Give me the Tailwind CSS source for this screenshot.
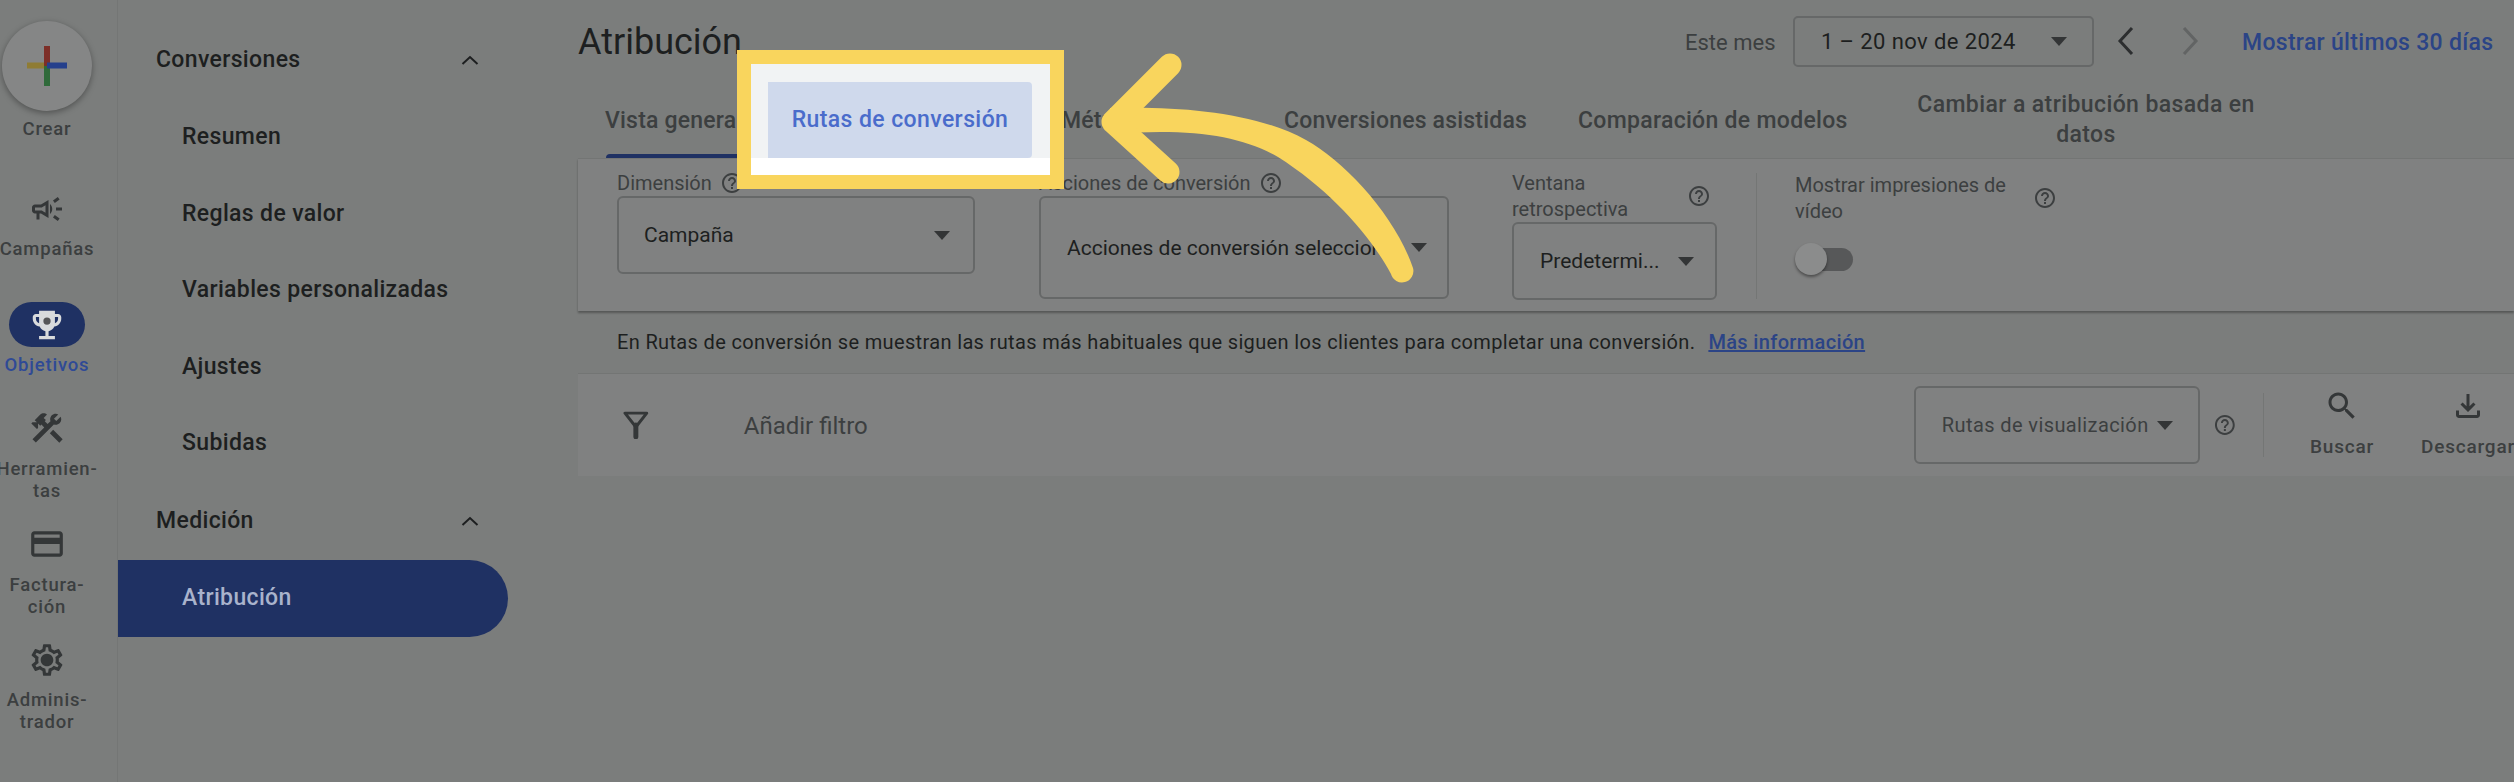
<!DOCTYPE html>
<html lang="es">
<head>
  <meta charset="UTF-8">
  <title>Atribución</title>
  <script src="https://cdn.jsdelivr.net/npm/@tailwindcss/browser@4"></script>
</head>
<body class="relative w-[2514px] h-[782px] overflow-hidden flex bg-[#7b7d7c] text-[#1d1f20] font-['Roboto',sans-serif]">

  <svg class="hidden">
    <symbol id="help" viewBox="0 0 24 24"><path d="M11 18h2v-2h-2v2zm1-16C6.48 2 2 6.48 2 12s4.48 10 10 10 10-4.48 10-10S17.52 2 12 2zm0 18c-4.41 0-8-3.59-8-8s3.59-8 8-8 8 3.59 8 8-3.59 8-8 8zm0-14c-2.21 0-4 1.79-4 4h2c0-1.1.9-2 2-2s2 .9 2 2c0 2-3 1.75-3 5h2c0-2.25 3-2.5 3-5 0-2.21-1.79-4-4-4z"/></symbol>
    <symbol id="caret" viewBox="0 0 16 9"><path d="M0 0h16L8 9z"/></symbol>
    <symbol id="chev-up" viewBox="0 0 18 10"><path d="M1.5 9 9 2l7.500 7" fill="none" stroke="currentColor" stroke-width="2"/></symbol>
  </svg>

  <!-- Left rail -->
  <aside class="w-[118px] h-full shrink-0 border-r border-[#747675] pr-[23px] flex flex-col items-center text-[18.5px] leading-[22px] tracking-[0.8px] font-medium text-[#3c3f40] text-center">
    <div class="mt-[21px] w-[90px] h-[90px] shrink-0 rounded-full bg-[#858686] shadow-[0_2px_6px_rgba(0,0,0,0.35)] flex items-center justify-center">
      <svg width="40" height="40" viewBox="0 0 40 40">
        <rect x="0" y="16.500" width="20" height="6" fill="#8f7c34"/>
        <rect x="17" y="0" width="6" height="20" fill="#7d2f28"/>
        <rect x="17" y="20" width="6" height="20" fill="#2f6a3a"/>
        <rect x="20" y="16.500" width="20" height="6" fill="#25408c"/>
      </svg>
    </div>
    <div class="mt-[7px] h-[22px]">Crear</div>

    <svg class="mt-[51px] shrink-0 fill-[#343738]" width="36" height="36" viewBox="0 0 24 24"><path d="M18 11v2h4v-2h-4zm-2 6.610c.96.71 2.210 1.650 3.200 2.390.4-.53.8-1.070 1.200-1.600-.99-.74-2.240-1.680-3.200-2.400-.4.54-.8 1.080-1.200 1.610zM20.400 5.600c-.4-.53-.8-1.070-1.200-1.600-.99.74-2.240 1.680-3.200 2.400.4.53.8 1.070 1.200 1.600.96-.72 2.210-1.650 3.200-2.400zM4 9c-1.100 0-2 .9-2 2v2c0 1.100.9 2 2 2h1v4h2v-4h1l5 3V6L8 9H4zm5.030 1.710L11 9.530v4.940l-1.970-1.180-.48-.29H4v-2h4.550l.48-.29zM15.500 12c0-1.330-.58-2.530-1.500-3.350v6.690c.92-.81 1.500-2.010 1.500-3.340z"/></svg>
    <div class="mt-[11px] h-[22px]">Campañas</div>

    <div class="mt-[42px] w-[76px] h-[45px] shrink-0 rounded-full bg-[#1f3163] flex items-center justify-center">
      <svg class="fill-[#d9dbdc]" width="38" height="38" viewBox="0 0 24 24"><path d="M19 5h-2V3H7v2H5c-1.100 0-2 .9-2 2v1c0 2.550 1.920 4.630 4.390 4.940.63 1.500 1.980 2.630 3.610 2.960V19H7v2h10v-2h-4v-3.100c1.630-.33 2.980-1.460 3.610-2.960C19.080 12.630 21 10.550 21 8V7c0-1.100-.9-2-2-2zM5 8V7h2v3.820C5.840 10.400 5 9.300 5 8zm14 0c0 1.300-.84 2.400-2 2.820V7h2v1z"/><circle cx="12" cy="9.500" r="2.300" fill="#565657"/></svg>
    </div>
    <div class="mt-[7px] h-[22px] text-[#2f4a96]">Objetivos</div>

    <svg class="mt-[33px] shrink-0 fill-[#343738]" width="38" height="38" viewBox="0 0 24 24"><path d="M13.780 15.300l6 6 2.110-2.160-6-6zM17.500 10c1.930 0 3.500-1.570 3.500-3.500 0-.58-.16-1.120-.41-1.600l-2.700 2.700-1.490-1.490 2.700-2.700c-.48-.25-1.020-.41-1.600-.41C15.570 3 14 4.570 14 6.500c0 .41.08.8.21 1.160l-1.850 1.850-1.780-1.780.71-.71-1.410-1.410L12 3.490c-1.170-1.170-3.070-1.170-4.240 0L4.220 7.030l1.410 1.410H2.810l-.71.71 3.540 3.540.71-.71V9.150l1.410 1.410.71-.71 1.780 1.780-7.410 7.410 2.120 2.120L16.340 9.790c.36.13.75.21 1.160.21z"/></svg>
    <div class="mt-[11px] h-[44px] whitespace-nowrap">Herramien-<br>tas</div>

    <svg class="mt-[23px] shrink-0 fill-[#343738]" width="38" height="38" viewBox="0 0 24 24"><path d="M20 4H4c-1.110 0-1.990.89-1.990 2L2 18c0 1.110.89 2 2 2h16c1.110 0 2-.89 2-2V6c0-1.110-.89-2-2-2zm0 14H4v-6h16v6zm0-10H4V6h16v2z"/></svg>
    <div class="mt-[11px] h-[44px]">Factura-<br>ción</div>

    <svg class="mt-[23px] shrink-0 fill-[#343738]" width="38" height="38" viewBox="0 0 24 24"><path d="M19.430 12.980c.04-.32.07-.64.07-.98 0-.34-.03-.66-.07-.98l2.110-1.650c.19-.15.24-.42.12-.64l-2-3.460c-.09-.16-.26-.25-.44-.25-.06 0-.12.01-.17.03l-2.490 1c-.52-.4-1.080-.73-1.690-.98l-.38-2.650C14.460 2.180 14.250 2 14 2h-4c-.25 0-.46.18-.49.42l-.38 2.650c-.61.25-1.170.59-1.690.98l-2.490-1c-.06-.02-.12-.03-.18-.03-.17 0-.34.09-.43.25l-2 3.460c-.13.22-.07.49.12.64l2.110 1.650c-.04.32-.07.65-.07.98 0 .33.03.66.07.98l-2.110 1.650c-.19.15-.24.42-.12.64l2 3.460c.09.16.26.25.44.25.06 0 .12-.01.17-.03l2.490-1c.52.4 1.080.73 1.690.98l.38 2.650c.03.24.24.42.49.42h4c.25 0 .46-.18.49-.42l.38-2.650c.61-.25 1.170-.59 1.690-.98l2.490 1c.06.02.12.03.18.03.17 0 .34-.09.43-.25l2-3.460c.12-.22.07-.49-.12-.64l-2.110-1.650zm-1.980-1.710c.04.31.05.52.05.73 0 .21-.02.43-.05.73l-.14 1.130.89.7 1.080.84-.7 1.210-1.270-.51-1.040-.42-.9.68c-.43.32-.84.56-1.250.73l-1.060.43-.16 1.130-.2 1.350h-1.400l-.19-1.350-.16-1.130-1.060-.43c-.43-.18-.83-.41-1.230-.71l-.91-.7-1.060.43-1.270.51-.7-1.210 1.080-.84.89-.7-.14-1.130c-.03-.31-.05-.54-.05-.74s.02-.43.05-.73l.14-1.130-.89-.7-1.080-.84.7-1.210 1.270.51 1.040.42.9-.68c.43-.32.84-.56 1.250-.73l1.060-.43.16-1.130.2-1.350h1.390l.19 1.350.16 1.130 1.060.43c.43.18.83.41 1.230.71l.91.7 1.060-.43 1.270-.51.7 1.210-1.070.85-.89.7.14 1.130zM12 8c-2.210 0-4 1.790-4 4s1.790 4 4 4 4-1.790 4-4-1.790-4-4-4z"/></svg>
    <div class="mt-[10px] h-[44px]">Adminis-<br>trador</div>
  </aside>

  <!-- Section nav -->
  <nav class="w-[460px] h-full shrink-0 pt-[21px] text-[23px] font-medium tracking-[0.35px]">
    <div class="h-[78px] pl-[38px] pr-[99px] flex items-center justify-between">
      <span>Conversiones</span>
      <svg class="w-[18px] h-[10px]"><use href="#chev-up"/></svg>
    </div>
    <div class="h-[77px] pl-[64px] flex items-center">Resumen</div>
    <div class="h-[76px] pl-[64px] flex items-center">Reglas de valor</div>
    <div class="h-[77px] pl-[64px] flex items-center">Variables personalizadas</div>
    <div class="h-[76px] pl-[64px] flex items-center">Ajustes</div>
    <div class="h-[77px] pl-[64px] flex items-center">Subidas</div>
    <div class="h-[78px] pl-[38px] pr-[99px] flex items-center justify-between">
      <span>Medición</span>
      <svg class="w-[18px] h-[10px]"><use href="#chev-up"/></svg>
    </div>
    <div class="h-[77px] w-[390px] pl-[64px] flex items-center rounded-r-full bg-[#1f3163] text-[#a9b3cc]">Atribución</div>
  </nav>

  <!-- Main -->
  <main class="flex-1 min-w-0">
    <header class="h-[84px] flex items-start">
      <h1 class="w-[1107px] pt-[21px] text-[36px] leading-[42px] font-normal">Atribución</h1>
      <span class="w-[108px] pt-[30px] text-[22px] leading-[26px] text-[#3c3f40]">Este mes</span>
      <div class="mt-[16px] w-[301px] h-[51px] rounded-[5px] border-2 border-[#666868] pl-[26px] pr-[25px] flex items-center justify-between text-[22px] tracking-[0.4px]">
        <span>1 – 20 nov de 2024</span>
        <svg class="w-[16px] h-[9px] fill-[#333536]"><use href="#caret"/></svg>
      </div>
      <svg class="ml-[23px] mt-[26px]" width="18" height="30" viewBox="0 0 18 30"><path d="M15 2 3 15l12 13" fill="none" stroke="#2c2e2f" stroke-width="3"/></svg>
      <svg class="ml-[46px] mt-[26px]" width="18" height="30" viewBox="0 0 18 30"><path d="m3 2 12 13L3 28" fill="none" stroke="#626464" stroke-width="3"/></svg>
      <a class="ml-[43px] pt-[30px] text-[23px] leading-[26px] font-medium tracking-[0.3px] text-[#2b4486] whitespace-nowrap">Mostrar últimos 30 días</a>
    </header>

    <div class="relative h-[74px] flex items-center text-[23px] font-medium text-[#3c3f40] tracking-[0.2px]">
      <span class="ml-[27px] w-[456px]">Vista general</span>
      <span class="w-[223px]">Métricas</span>
      <span class="w-[294px]">Conversiones asistidas</span>
      <span class="w-[340px] tracking-[0.3px]">Comparación de modelos</span>
      <span class="w-[340px] -ml-[2px] text-center whitespace-nowrap leading-[30px] -mt-[2px] tracking-[0.4px]">Cambiar a atribución basada en<br>datos</span>
      <div class="absolute left-[28px] bottom-0 w-[190px] h-[4px] rounded-t bg-[#1f3163]"></div>
    </div>

    <!-- Selectors -->
    <section class="h-[153px] bg-[#808181] border-t border-[#737574] shadow-[0_2px_2px_rgba(0,0,0,0.3)] pl-[39px] flex text-[20px] leading-[26px] text-[#3c3f40]">
      <div class="w-[422px] pt-[11px]">
        <div class="h-[26px] flex items-center gap-[8px]">Dimensión <svg class="w-[24px] h-[24px] fill-[#3c3f40]"><use href="#help"/></svg></div>
        <div class="w-[358px] h-[78px] rounded-[6px] border-2 border-[#666868] pl-[25px] pr-[23px] flex items-center justify-between text-[21px] text-[#1d1f20]">
          <span>Campaña</span>
          <svg class="w-[16px] h-[9px] fill-[#333536]"><use href="#caret"/></svg>
        </div>
      </div>
      <div class="w-[473px] pt-[11px]">
        <div class="h-[26px] flex items-center gap-[8px]">Acciones de conversión <svg class="w-[24px] h-[24px] fill-[#3c3f40]"><use href="#help"/></svg></div>
        <div class="w-[410px] h-[103px] rounded-[6px] border-2 border-[#666868] pl-[26px] pr-[20px] flex items-center justify-between text-[21px] text-[#1d1f20]">
          <span class="whitespace-nowrap">Acciones de conversión seleccion...</span>
          <svg class="w-[16px] h-[9px] shrink-0 fill-[#333536]"><use href="#caret"/></svg>
        </div>
      </div>
      <div class="w-[244px] pt-[11px]">
        <div class="w-[199px] flex items-center justify-between">
          <span class="w-[150px]">Ventana retrospectiva</span>
          <svg class="w-[24px] h-[24px] fill-[#3c3f40]"><use href="#help"/></svg>
        </div>
        <div class="w-[205px] h-[78px] rounded-[6px] border-2 border-[#666868] pl-[26px] pr-[21px] flex items-center justify-between text-[21px] text-[#1d1f20]">
          <span>Predetermi...</span>
          <svg class="w-[16px] h-[9px] fill-[#333536]"><use href="#caret"/></svg>
        </div>
      </div>
      <div class="mt-[14px] h-[126px] border-l border-[#747675] pl-[38px]">
        <div class="w-[262px] -mt-[1px] flex items-center justify-between">
          <span class="w-[224px]">Mostrar impresiones de vídeo</span>
          <svg class="w-[24px] h-[24px] fill-[#3c3f40]"><use href="#help"/></svg>
        </div>
        <div class="relative mt-[19px] w-[58px] h-[32px] flex items-center">
          <div class="ml-[16px] w-[42px] h-[23px] rounded-r-full bg-[#575859]"></div>
          <div class="absolute left-0 top-0 w-[32px] h-[32px] rounded-full bg-[#8b8c8c] shadow-[0_2px_3px_rgba(0,0,0,0.4)]"></div>
        </div>
      </div>
    </section>

    <!-- Info text -->
    <p class="h-[63px] pl-[39px] flex items-center text-[20px] tracking-[0.35px] text-[#1d1f20] border-b border-[#737574]">
      En Rutas de conversión se muestran las rutas más habituales que siguen los clientes para completar una conversión.
      <a class="ml-[13px] font-medium text-[#2b4486] underline">Más información</a>
    </p>

    <!-- Filter bar -->
    <div class="h-[102px] bg-[#808181] flex items-center text-[24px] text-[#3c3f40]">
      <svg class="ml-[45px]" width="26" height="28" viewBox="0 0 26 28" fill="none" stroke="#343738" stroke-linejoin="round"><path d="M2 2h22l-11 14z" stroke-width="3"/><path d="M13 14v12" stroke-width="5" stroke-linecap="round"/></svg>
      <span class="ml-[95px] w-[1183px] pt-[2px]">Añadir filtro</span>
      <div class="w-[289px] h-[78px] rounded-[6px] border-2 border-[#666868] pl-[26px] pr-[25px] flex items-center justify-between text-[20px] tracking-[0.4px]">
        <span>Rutas de visualización</span>
        <svg class="w-[16px] h-[9px] fill-[#333536]"><use href="#caret"/></svg>
      </div>
      <svg class="ml-[13px] w-[24px] h-[24px] fill-[#3c3f40]"><use href="#help"/></svg>
      <div class="ml-[26px] h-[64px] border-l border-[#747675]"></div>
      <div class="ml-[46px] w-[64px] flex flex-col items-center text-[19px] font-medium tracking-[0.8px]">
        <svg class="fill-[#343738]" width="36" height="36" viewBox="0 0 24 24"><path d="M15.500 14h-.79l-.28-.27C15.410 12.590 16 11.110 16 9.500 16 5.910 13.090 3 9.500 3S3 5.910 3 9.500 5.910 16 9.500 16c1.610 0 3.090-.59 4.230-1.570l.27.28v.79l5 4.990L20.490 19l-4.990-5zm-6 0C7.010 14 5 11.990 5 9.500S7.010 5 9.500 5 14 7.010 14 9.500 11.990 14 9.500 14z"/></svg>
        <span class="mt-[9px]">Buscar</span>
      </div>
      <div class="ml-[48px] w-[92px] shrink-0 flex flex-col items-center text-[19px] font-medium tracking-[0.8px] whitespace-nowrap">
        <svg class="fill-[#343738]" width="36" height="36" viewBox="0 0 24 24"><path d="M18 15v3H6v-3H4v3c0 1.100.9 2 2 2h12c1.100 0 2-.9 2-2v-3h-2zm-1-4-1.410-1.410L13 12.170V4h-2v8.170L8.410 9.590 7 11l5 5 5-5z"/></svg>
        <span class="mt-[9px]">Descargar</span>
      </div>
    </div>
  </main>

  <!-- Callout over the dimmed page -->
  <div class="absolute left-[737px] top-[50px] w-[327px] h-[139px] border-[14px] border-[#f9d55d] bg-white">
    <div class="h-[94px] bg-[#f1f3f4] pl-[17px] pt-[18px]">
      <div class="w-[264px] h-[76px] rounded-r-[4px] bg-[#cfd9ec] flex items-center justify-center text-[23px] font-medium tracking-[0.4px] text-[#4a6ccb]">Rutas de conversión</div>
    </div>
  </div>
  <svg class="absolute left-0 top-0 pointer-events-none" width="2514" height="782" fill="none" stroke="#f9d55d" stroke-width="23" stroke-linecap="round" stroke-linejoin="round">
    <path fill="#f9d55d" stroke="none" d="M1110 108C1180 106 1255 112 1306 140C1345 162 1395 215 1413 268A11 11 0 0 1 1391 274C1370 235 1330 190 1278 157C1240 135 1190 128 1110 134Z"/>
    <path d="M1170 65 1113 122 1168 172"/>
  </svg>
</body>
</html>
